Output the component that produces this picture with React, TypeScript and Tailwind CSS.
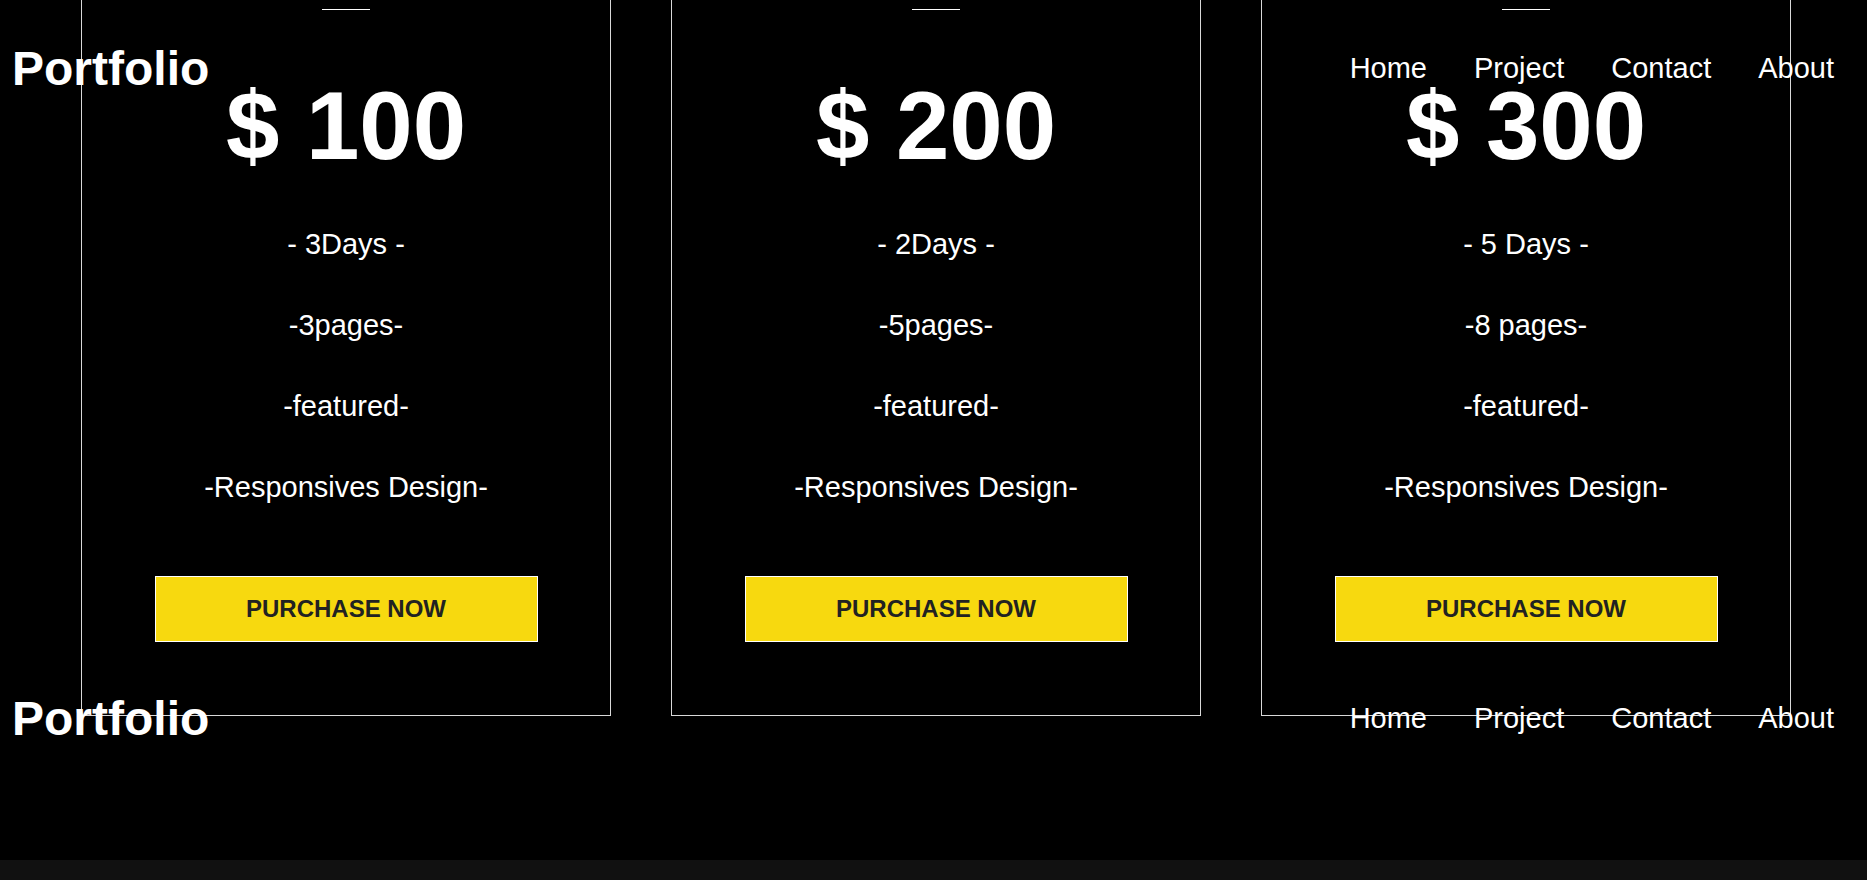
import React from "react";

const plans = [
  { price: "$ 100", items: ["- 3Days -", "-3pages-", "-featured-", "-Responsives Design-"] },
  { price: "$ 200", items: ["- 2Days -", "-5pages-", "-featured-", "-Responsives Design-"] },
  { price: "$ 300", items: ["- 5 Days -", "-8 pages-", "-featured-", "-Responsives Design-"] },
];

const navLinks = ["Home", "Project", "Contact", "About"];

function Header() {
  return (
    <div className="flex h-[136px] items-center justify-between pl-[12px] pr-[33px] text-white">
      <div className="pt-[2px] text-[48px] font-bold leading-none">Portfolio</div>
      <nav className="flex gap-[47px] text-[29px] leading-none">
        {navLinks.map((l) => (
          <a key={l} href="#" className="text-white">
            {l}
          </a>
        ))}
      </nav>
    </div>
  );
}

function Card({ price, items }: { price: string; items: string[] }) {
  return (
    <div className="flex w-[530px] flex-col items-center border border-[#d9d9d9] pt-[48px] pb-[73px] text-white">
      <div className="h-px w-[48px] bg-white" />
      <div className="mt-[68px] text-[96px] font-bold leading-none">{price}</div>
      <ul className="mt-[30px] flex flex-col items-center">
        {items.map((it, i) => (
          <li key={i} className="text-[29px] leading-[81px]">
            {it}
          </li>
        ))}
      </ul>
      <button className="mt-[48px] flex h-[66px] w-[383px] items-center justify-center border border-white bg-[#f7d90f] text-[24px] font-bold leading-none text-[#222222]">
        PURCHASE NOW
      </button>
    </div>
  );
}

export default function App() {
  return (
    <div
      className="relative flex h-[880px] w-full flex-col overflow-hidden bg-black"
      style={{ fontFamily: '"Liberation Sans", Arial, Helvetica, sans-serif' }}
    >
      <div className="mt-[-40px] flex gap-[60px] pl-[81px]">
        {plans.map((p) => (
          <Card key={p.price} price={p.price} items={p.items} />
        ))}
      </div>
      <div className="relative z-10 mt-[-66px]">
        <Header />
      </div>
      <div className="h-[74px] shrink-0" />
      <div className="h-[100px] shrink-0 bg-[#111111]" />
      <div className="absolute left-0 right-0 top-0 z-20">
        <Header />
      </div>
    </div>
  );
}
